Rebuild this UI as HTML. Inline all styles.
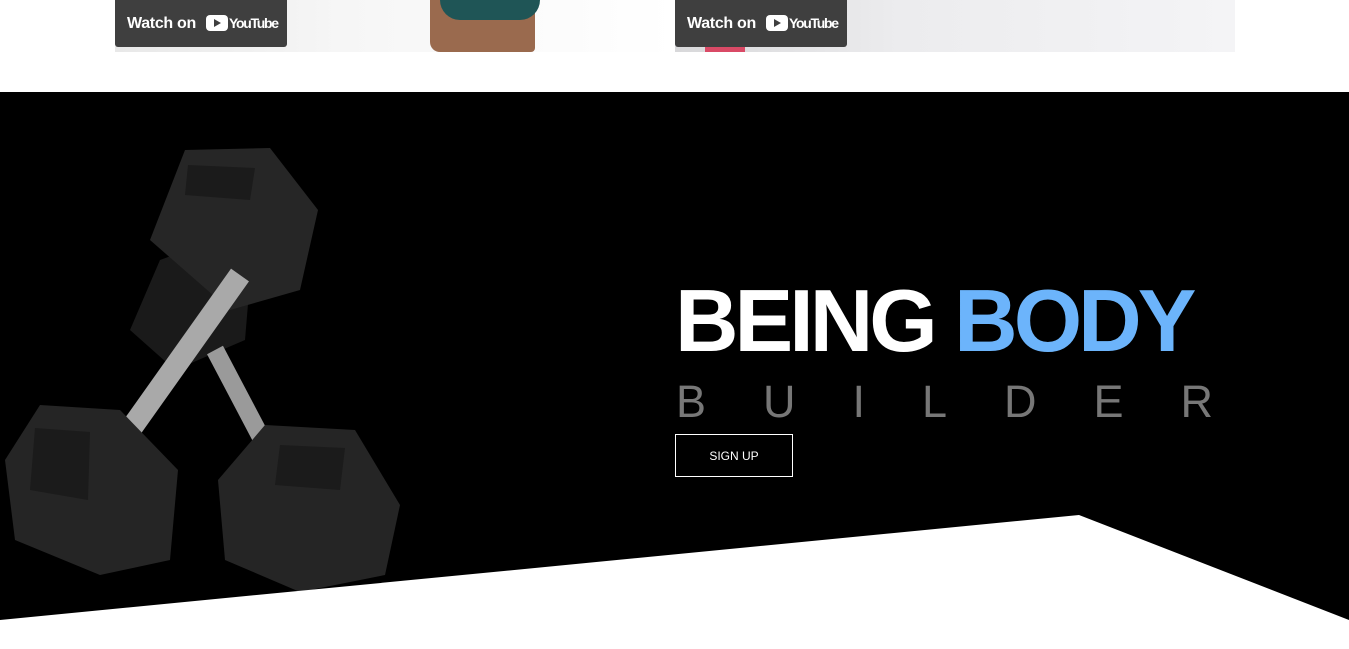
<!DOCTYPE html>
<html><head><meta charset="utf-8"><style>
html,body{margin:0;padding:0;background:#fff;width:1349px;height:649px;overflow:hidden;position:relative;font-family:"Liberation Sans",Arial,sans-serif}
.vid{position:absolute;top:0;height:52px;overflow:hidden}
.yt{position:absolute;left:0;top:0;width:172px;height:47px;background:#3f3f3f;border-radius:0 0 3px 3px;color:#fff;font-weight:bold;font-size:16px;line-height:47px;overflow:hidden}
.yt span{position:absolute;left:12px;top:0;letter-spacing:-0.3px}
.logo{position:absolute;left:91px;top:15px;width:22px;height:16px;background:#fff;border-radius:4px}
.logo:after{content:"";position:absolute;left:8px;top:4px;border-left:7px solid #3f3f3f;border-top:4px solid transparent;border-bottom:4px solid transparent}
.yt b{position:absolute;left:114px;top:0;font-size:14px;letter-spacing:-1.3px}
#hero{position:absolute;left:0;top:92px;width:1349px;height:557px}
.t1{position:absolute;left:675px;top:271px;font-size:88px;font-weight:bold;color:#fff;letter-spacing:-4px;line-height:100px;white-space:nowrap}
.t1 span{color:#6cb4fb}
.t2{position:absolute;left:676px;top:376px;font-size:45px;color:#777;letter-spacing:57px;line-height:52px;white-space:nowrap}
.btn{position:absolute;left:675px;top:434px;width:116px;height:41px;border:1px solid #fff;color:#fff;font-size:12px;text-align:center;line-height:43px}
</style></head><body>
<div class="vid" style="left:115px;width:560px;background:linear-gradient(90deg,#e8e8e8,#f6f6f6 40%,#fff)">
<div style="position:absolute;left:315px;top:0;width:105px;height:52px;background:#9a6a4e;border-radius:0 0 4px 10px"></div>
<div style="position:absolute;left:325px;top:0;width:100px;height:20px;background:#1f5556;border-radius:0 0 20px 20px"></div>
<div class="yt"><span>Watch on</span><div class="logo"></div><b>YouTube</b></div></div>
<div class="vid" style="left:675px;width:560px;background:linear-gradient(90deg,#d8d8da,#ececee 40%,#f4f4f6)">
<div style="position:absolute;left:30px;top:0;width:40px;height:52px;background:#d94a66"></div>
<div class="yt"><span>Watch on</span><div class="logo"></div><b>YouTube</b></div></div>
<svg id="hero" width="1349" height="557" viewBox="0 92 1349 557">
<rect x="0" y="92" width="1349" height="557" fill="#000"/>
<g>
<polygon points="160,260 215,240 250,280 245,340 175,370 130,330" fill="#1a1a1a"/>
<polygon points="185,150 270,148 318,210 300,290 230,310 150,240" fill="#262626"/>
<polygon points="188,165 255,168 250,200 185,195" fill="#1b1b1b"/>
<line x1="240" y1="275" x2="130" y2="430" stroke="#a9a9a9" stroke-width="22"/>
<line x1="215" y1="350" x2="265" y2="445" stroke="#9a9a9a" stroke-width="18"/>
<polygon points="40,405 120,410 178,470 170,560 100,575 15,540 5,460" fill="#252525"/>
<polygon points="35,428 90,432 88,500 30,490" fill="#1b1b1b"/>
<polygon points="265,425 355,430 400,505 385,575 300,592 225,560 218,480" fill="#252525"/>
<polygon points="280,445 345,448 340,490 275,485" fill="#1b1b1b"/>
</g>
<polygon points="0,620 1079,515 1349,620 1349,649 0,649" fill="#fff"/>
</svg>
<div class="t1">BEING <span>BODY</span></div>
<div class="t2">BUILDER</div>
<div class="btn">SIGN UP</div>
</body></html>
